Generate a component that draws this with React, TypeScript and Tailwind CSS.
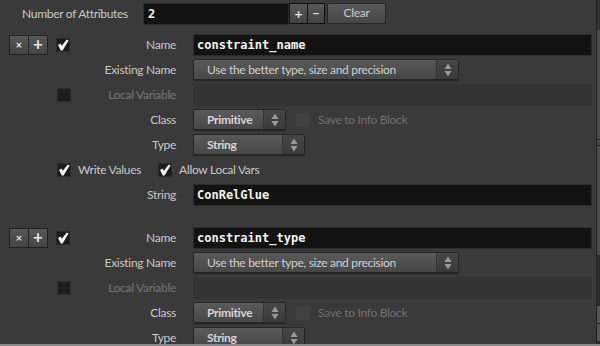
import React from 'react';

const sans = "font-['Lato',sans-serif]";
const mono = "font-['DejaVu_Sans_Mono',monospace]";
const txt = 'text-[12px] tracking-[-0.3px]';

// small stacked up/down arrows used by the menu buttons
const UpDown = () => (
  <svg width="8" height="14" viewBox="0 0 8 14">
    <path d="M4 0.5 L7.5 6 L0.5 6 Z" fill="#9a9a9a" />
    <path d="M4 13.5 L7.5 8 L0.5 8 Z" fill="#9a9a9a" />
  </svg>
);

const Check = ({ on, dim }: { on?: boolean; dim?: boolean }) => (
  <div
    className={`w-[14px] h-[14px] flex items-center justify-center ${
      dim ? 'bg-[#414141]' : 'bg-[#1c1c1c] border border-[#2b2b2b]'
    }`}
  >
    {on && (
      <svg width="12" height="12" viewBox="0 0 12 12">
        <path d="M1 6 L3.6 4.4 L4.8 6.8 L9.8 0.6 L11.6 1.6 L5.6 11.6 L3.8 11.6 Z" fill="#f4f4f4" />
      </svg>
    )}
  </div>
);

const Menu = ({ w, text, bold }: { w: string; text: string; bold?: boolean }) => (
  <div
    className={`${w} h-[21px] flex rounded-[2px] border border-[#262626] bg-gradient-to-b from-[#5a5a5a] to-[#474747] shadow-[0_1px_1px_rgba(0,0,0,0.4)]`}
  >
    <div
      className={`flex-1 pl-[13px] flex items-center ${txt} ${
        bold ? 'font-bold text-[#d6d6d6]' : 'text-[#cfcfcf]'
      }`}
    >
      {text}
    </div>
    <div className="w-[22px] flex items-center justify-center bg-gradient-to-b from-[#474747] to-[#3a3a3a] border-l border-[#333]">
      <UpDown />
    </div>
  </div>
);

const Field = ({ value }: { value: string }) => (
  <div
    className={`flex-1 h-[22px] bg-[#131313] border border-[#2c2c2c] flex items-center pl-[3px] text-[12px] font-bold text-[#f4f4f4] ${mono}`}
  >
    {value}
  </div>
);

const Label = ({ text, dim }: { text: string; dim?: boolean }) => (
  <span className={`ml-auto pr-[17px] ${txt} ${dim ? 'text-[#777]' : 'text-[#c9c9c9]'}`}>{text}</span>
);

const Row = ({ left, children }: { left?: React.ReactNode; children?: React.ReactNode }) => (
  <div className="h-[25px] flex items-center">
    <div className="w-[193px] flex items-center pl-[9px]">{left}</div>
    <div className="flex-1 flex items-center pr-[4px]">{children}</div>
  </div>
);

const SmallBtn = ({ children, cls }: { children: React.ReactNode; cls?: string }) => (
  <div
    className={`w-[20px] h-[20px] flex items-center justify-center border border-[#222] bg-gradient-to-b from-[#575757] to-[#444] text-[#e8e8e8] ${cls ?? ''}`}
  >
    {children}
  </div>
);

const Block = ({ name, value }: { name: string; value?: string }) => (
  <div className="flex flex-col">
    <Row
      left={
        <>
          <div className="flex">
            <SmallBtn>
              <span className="text-[11px] font-bold leading-none">×</span>
            </SmallBtn>
            <SmallBtn cls="-ml-px">
              <span className="text-[17px] font-bold leading-none -mt-[2px]">+</span>
            </SmallBtn>
          </div>
          <div className="ml-[8px]">
            <Check on />
          </div>
          <Label text="Name" />
        </>
      }
    >
      <Field value={name} />
    </Row>
    <Row left={<Label text="Existing Name" />}>
      <Menu w="w-[266px]" text="Use the better type, size and precision" />
    </Row>
    <Row
      left={
        <>
          <div className="ml-[48px]">
            <Check />
          </div>
          <Label text="Local Variable" dim />
        </>
      }
    >
      <div className="flex-1 h-[22px] bg-[#343434]" />
    </Row>
    <Row left={<Label text="Class" />}>
      <Menu w="w-[93px]" text="Primitive" bold />
      <div className="ml-[10px]">
        <Check dim />
      </div>
      <span className={`ml-[8px] ${txt} text-[#707070]`}>Save to Info Block</span>
    </Row>
    <Row left={<Label text="Type" />}>
      <Menu w="w-[112px]" text="String" bold />
    </Row>
    {value !== undefined && (
      <>
        <div className={`h-[25px] flex items-center pl-[57px] ${txt} text-[#c9c9c9]`}>
          <Check on />
          <span className="ml-[7px]">Write Values</span>
          <div className="ml-[17px]">
            <Check on />
          </div>
          <span className="ml-[7px]">Allow Local Vars</span>
        </div>
        <Row left={<Label text="String" />}>
          <Field value={value} />
        </Row>
      </>
    )}
  </div>
);

export default function App() {
  return (
    <div className={`w-[600px] h-[346px] overflow-hidden bg-[#3a3a3a] flex flex-col ${sans}`}>
      <div className="flex h-[344px]">
        <div className="flex-1 flex flex-col">
          <div className="h-[22px] mt-[3px] flex items-center">
            <span className={`ml-[22px] w-[121px] ${txt} text-[#c9c9c9]`}>Number of Attributes</span>
            <div className={`w-[146px] h-[22px] bg-[#131313] border border-[#2c2c2c] flex items-center pl-[4px] text-[12px] font-bold text-[#f4f4f4] ${mono}`}>
              2
            </div>
            <div className="flex border border-[#111] h-[21px] -mt-[1px]">
              <div className="w-[17px] flex items-center justify-center bg-gradient-to-b from-[#575757] to-[#444] text-[#e0e0e0] text-[14px] font-bold leading-none">+</div>
              <div className="w-[17px] flex items-center justify-center bg-gradient-to-b from-[#575757] to-[#444] border-l border-[#111] text-[#e0e0e0] text-[13px] font-bold leading-none">–</div>
            </div>
            <div className={`ml-[2px] -mt-[2px] w-[59px] h-[21px] rounded-[2px] border border-[#262626] bg-gradient-to-b from-[#5a5a5a] to-[#474747] flex items-center justify-center ${txt} text-[#c9c9c9]`}>
              Clear
            </div>
          </div>
          <div className="mt-[7px]">
            <Block name="constraint_name" value="ConRelGlue" />
          </div>
          <div className="mt-[18px]">
            <Block name="constraint_type" />
          </div>
        </div>
        <div className="w-[4px] flex flex-col bg-[#2b2b2b] border-l border-[#222]">
          <div className="h-[30px] bg-[#333]" />
          <div className="h-[225px] bg-[#4a4a4a] flex items-center justify-center">
            <div className="w-full h-[7px] border-y border-[#222]" />
          </div>
          <div className="h-[50px] bg-[#2a2a2a]" />
          <div className="h-[18px] bg-[#555] border-t border-[#222]" />
          <div className="h-[18px] bg-[#555] border-t border-[#222]" />
        </div>
      </div>
      <div className="h-[2px] bg-[#8a8a8a]" />
    </div>
  );
}
